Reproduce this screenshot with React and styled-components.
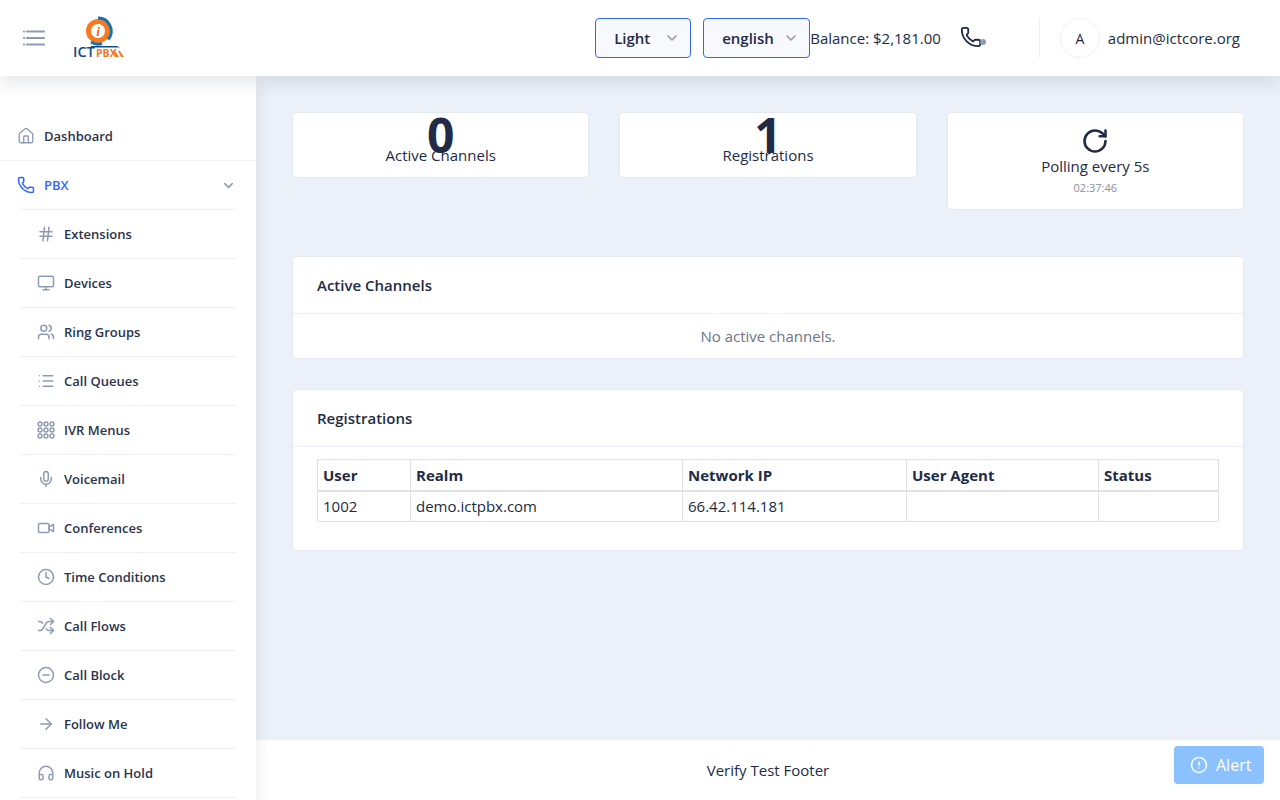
import React from 'react';
import styled, { createGlobalStyle } from 'styled-components';
import {
  ArrowRight, ChevronDown, CircleAlert, CircleMinus, Clock, Hash, Headphones, House, List,
  Mic, Monitor, Phone, RotateCw, Shuffle, Users, Video,
} from 'lucide-react';

const GlobalStyle = createGlobalStyle`
  html, body { margin: 0; padding: 0; height: 100%; overflow: hidden; }
  body { font-family: "Open Sans", "Noto Sans", sans-serif; color: #222b45; background: #ecf0f8; }
  * { box-sizing: border-box; }
`;

const Page = styled.div`
  display: flex;
  flex-direction: column;
  height: 800px;
  overflow: hidden;
`;

const Header = styled.header`
  position: relative;
  z-index: 3;
  flex: none;
  display: flex;
  align-items: center;
  height: 76px;
  padding: 0 40px 0 22px;
  background: #fff;
  box-shadow: 0 8px 16px 0 rgba(44, 51, 73, 0.1);
`;

const MenuButton = styled.svg`
  flex: none;
  width: 24px;
  height: 24px;
  color: #8f9bb3;
`;

const Logo = styled.svg`
  flex: none;
  width: 54px;
  height: 46px;
  margin: 2px 0 0 25px;
`;

const HeaderRight = styled.div`
  display: flex;
  align-items: center;
  margin-left: auto;
`;

const SelectBox = styled.div`
  display: flex;
  align-items: center;
  justify-content: space-between;
  width: ${(p) => p.$width}px;
  height: 40px;
  margin-left: ${(p) => p.$gap}px;
  padding: 0 ${(p) => p.$right}px 0 ${(p) => p.$left}px;
  border: 1px solid #3366ff;
  border-radius: 4px;
  background: #f7f9fc;
  font-size: 15px;
  font-weight: 600;
  color: #222b45;
  svg { color: #8f9bb3; }
`;

const Balance = styled.span`
  font-size: 15px;
  white-space: nowrap;
`;

const CallStatus = styled.div`
  position: relative;
  width: 27px;
  height: 24px;
  margin-left: 19px;
  color: #222b45;
`;

const StatusDot = styled.span`
  position: absolute;
  right: 1px;
  bottom: 5px;
  width: 6px;
  height: 6px;
  border-radius: 50%;
  background: #8f9bb3;
`;

const Divider = styled.div`
  width: 1px;
  height: 40px;
  margin: 0 20px 0 52px;
  background: #edf1f7;
`;

const Avatar = styled.div`
  display: flex;
  align-items: center;
  justify-content: center;
  width: 40px;
  height: 40px;
  border: 1px solid #edf1f7;
  border-radius: 50%;
  font-size: 14px;
`;

const UserName = styled.span`
  margin-left: 8px;
  font-size: 15px;
`;

const Body = styled.div`
  flex: 1;
  display: flex;
  min-height: 0;
`;

const Sidebar = styled.nav`
  position: relative;
  z-index: 2;
  flex: none;
  width: 256px;
  padding-top: 36px;
  overflow: hidden;
  background: #fff;
  box-shadow: 0 8px 16px 0 rgba(44, 51, 73, 0.1);
`;

const TopItem = styled.div`
  display: flex;
  align-items: center;
  height: ${(p) => p.$height}px;
  padding: 0 20px 0 17px;
  border-bottom: ${(p) => (p.$flat ? 'none' : '1px solid #edf1f7')};
  font-size: 13px;
  font-weight: 600;
  color: ${(p) => (p.$active ? '#3366ff' : '#2b334d')};
  svg.lead { flex: none; margin-right: 9px; color: ${(p) => (p.$active ? '#3366ff' : '#8f9bb3')}; }
  svg.chevron { margin-left: auto; color: #8f9bb3; }
`;

const SubList = styled.div`
  margin: 0 20px;
`;

const SubItem = styled.div`
  display: flex;
  align-items: center;
  height: 49px;
  padding-left: 17px;
  border-top: 1px solid #edf1f7;
  font-size: 13px;
  font-weight: 600;
  color: #2b334d;
  svg { flex: none; margin-right: 9px; color: #8f9bb3; }
`;

const ContentColumn = styled.div`
  flex: 1;
  display: flex;
  flex-direction: column;
  min-width: 0;
`;

const Main = styled.main`
  flex: 1;
  padding: 36px 36px 0;
  background: #ecf0f8;
`;

const StatRow = styled.div`
  display: grid;
  grid-template-columns: repeat(3, 1fr);
  align-items: start;
  gap: 30px;
  margin-bottom: 46px;
`;

const StatCard = styled.div`
  display: flex;
  flex-direction: column;
  align-items: center;
  height: ${(p) => p.$height}px;
  padding-top: ${(p) => p.$top}px;
  border: 1px solid #e4e8f0;
  border-radius: 4px;
  background: #fff;
`;

const StatNumber = styled.div`
  height: 23px;
  font-size: 48px;
  font-weight: 700;
  line-height: 27px;
  color: #222b45;
`;

const StatLabel = styled.div`
  position: relative;
  font-size: 15px;
  line-height: 22px;
`;

const PollTime = styled.div`
  margin-top: 3px;
  font-size: 11px;
  line-height: 15px;
  color: #8a8f9c;
`;

const Panel = styled.section`
  margin-bottom: 30px;
  border: 1px solid #e4e8f0;
  border-radius: 4px;
  background: #fff;
`;

const PanelTitle = styled.h2`
  display: flex;
  align-items: center;
  height: 57px;
  margin: 0;
  padding: 0 24px;
  border-bottom: 1px solid #edf1f7;
  font-size: 15px;
  font-weight: 600;
  color: #222b45;
`;

const EmptyText = styled.div`
  height: 44px;
  font-size: 15px;
  line-height: 44px;
  text-align: center;
  color: #6d7587;
`;

const PanelBody = styled.div`
  padding: 12px 24px 28px;
`;

const DataTable = styled.table`
  width: 901px;
  border-collapse: collapse;
  table-layout: fixed;
  font-size: 15px;
  th, td { padding: 0 5px; border: 1px solid #e0e2e7; text-align: left; color: #222b45; }
  th { height: 31px; border-bottom-width: 2px; font-weight: 700; }
  td { height: 31px; }
`;

const Footer = styled.footer`
  flex: none;
  display: flex;
  align-items: center;
  justify-content: center;
  height: 60px;
  background: #fff;
  font-size: 15px;
`;

const AlertButton = styled.button`
  position: fixed;
  right: 16px;
  bottom: 16px;
  z-index: 4;
  display: flex;
  align-items: center;
  gap: 8px;
  width: 90px;
  height: 38px;
  padding: 0 0 0 16px;
  border: 0;
  border-radius: 4px;
  background: #8cc1ff;
  font-family: inherit;
  font-size: 16px;
  font-weight: 400;
  color: #fff;
`;

function KeypadIcon() {
  const spots = [4, 12, 20];
  return (
    <svg width="18" height="18" viewBox="0 0 24 24" fill="none" stroke="currentColor" strokeWidth="2">
      {spots.map((y) => spots.map((x) => <circle key={`${x}-${y}`} cx={x} cy={y} r="2.6" />))}
    </svg>
  );
}

const subItems = [
  ['Extensions', <Hash size={18} strokeWidth={2} />],
  ['Devices', <Monitor size={18} strokeWidth={2} />],
  ['Ring Groups', <Users size={18} strokeWidth={2} />],
  ['Call Queues', <List size={18} strokeWidth={1.8} />],
  ['IVR Menus', <KeypadIcon />],
  ['Voicemail', <Mic size={18} strokeWidth={2} />],
  ['Conferences', <Video size={18} strokeWidth={2} />],
  ['Time Conditions', <Clock size={18} strokeWidth={2} />],
  ['Call Flows', <Shuffle size={18} strokeWidth={2} />],
  ['Call Block', <CircleMinus size={18} strokeWidth={2} />],
  ['Follow Me', <ArrowRight size={18} strokeWidth={2} />],
  ['Music on Hold', <Headphones size={18} strokeWidth={2} />],
];

export default function App() {
  return (
    <Page>
      <GlobalStyle />
      <Header>
        <MenuButton viewBox="0 0 24 24" fill="none" stroke="currentColor" strokeWidth="2.2" strokeLinecap="round">
          <path d="M5 5.500h17M5 12h17M5 18.500h17M2 5.500h.2M2 12h.2M2 18.500h.2" />
        </MenuButton>
        <Logo viewBox="0 0 54 46">
          <circle cx="27" cy="15" r="9.500" fill="none" stroke="#f47b20" strokeWidth="5" />
          <path d="M27 2a13 13 0 0 1 10 21.500M31 27.500a13 13 0 0 1-11-1.500" fill="none" stroke="#1d6fa5" strokeWidth="3" />
          <text x="27" y="20" textAnchor="middle" fontFamily="Liberation Serif, serif" fontStyle="italic" fontWeight="700" fontSize="13" fill="#e8651a">i</text>
          <text x="2" y="41" fontFamily="Open Sans, sans-serif" fontWeight="600" fontSize="14.500" fill="#0f4c81">ICT</text>
          <text x="25" y="41" fontFamily="Open Sans, sans-serif" fontWeight="700" fontSize="10.500" fill="#f47b20">PBX</text>
          <path d="M20 30h26l3 1.500H20z" fill="#0f4c81" />
          <path d="M45 41l-3-6 1.500-1 4.500 7zM50 41l-3-6 1.500-.5 4.500 6.500z" fill="#f47b20" />
        </Logo>
        <HeaderRight>
          <SelectBox $width={96} $gap={0} $left={18} $right={10}>
            Light <ChevronDown size={16} strokeWidth={2.4} />
          </SelectBox>
          <SelectBox $width={107} $gap={12} $left={18} $right={10}>
            english <ChevronDown size={16} strokeWidth={2.4} />
          </SelectBox>
          <Balance>Balance: $2,181.00</Balance>
          <CallStatus>
            <Phone size={22} strokeWidth={2} />
            <StatusDot />
          </CallStatus>
          <Divider />
          <Avatar>A</Avatar>
          <UserName>admin@ictcore.org</UserName>
        </HeaderRight>
      </Header>
      <Body>
        <Sidebar>
          <TopItem $height={49}>
            <House className="lead" size={18} strokeWidth={1.8} />
            Dashboard
          </TopItem>
          <TopItem $height={48} $active $flat>
            <Phone className="lead" size={18} strokeWidth={2} />
            PBX
            <ChevronDown className="chevron" size={15} strokeWidth={2.4} />
          </TopItem>
          <SubList>
            {subItems.map(([label, icon]) => (
              <SubItem key={label}>
                {icon}
                {label}
              </SubItem>
            ))}
            <SubItem />
          </SubList>
        </Sidebar>
        <ContentColumn>
          <Main>
            <StatRow>
              <StatCard $height={66} $top={8}>
                <StatNumber>0</StatNumber>
                <StatLabel>Active Channels</StatLabel>
              </StatCard>
              <StatCard $height={66} $top={8}>
                <StatNumber>1</StatNumber>
                <StatLabel>Registrations</StatLabel>
              </StatCard>
              <StatCard $height={98} $top={14}>
                <RotateCw size={28} strokeWidth={2.2} />
                <StatLabel>Polling every 5s</StatLabel>
                <PollTime>02:37:46</PollTime>
              </StatCard>
            </StatRow>
            <Panel>
              <PanelTitle>Active Channels</PanelTitle>
              <EmptyText>No active channels.</EmptyText>
            </Panel>
            <Panel>
              <PanelTitle>Registrations</PanelTitle>
              <PanelBody>
                <DataTable>
                  <colgroup>
                    <col style={{ width: 93 }} />
                    <col style={{ width: 272 }} />
                    <col style={{ width: 224 }} />
                    <col style={{ width: 192 }} />
                    <col style={{ width: 120 }} />
                  </colgroup>
                  <thead>
                    <tr>
                      <th>User</th>
                      <th>Realm</th>
                      <th>Network IP</th>
                      <th>User Agent</th>
                      <th>Status</th>
                    </tr>
                  </thead>
                  <tbody>
                    <tr>
                      <td>1002</td>
                      <td>demo.ictpbx.com</td>
                      <td>66.42.114.181</td>
                      <td />
                      <td />
                    </tr>
                  </tbody>
                </DataTable>
              </PanelBody>
            </Panel>
          </Main>
          <Footer>Verify Test Footer</Footer>
        </ContentColumn>
      </Body>
      <AlertButton>
        <CircleAlert size={18} strokeWidth={2} />
        Alert
      </AlertButton>
    </Page>
  );
}
